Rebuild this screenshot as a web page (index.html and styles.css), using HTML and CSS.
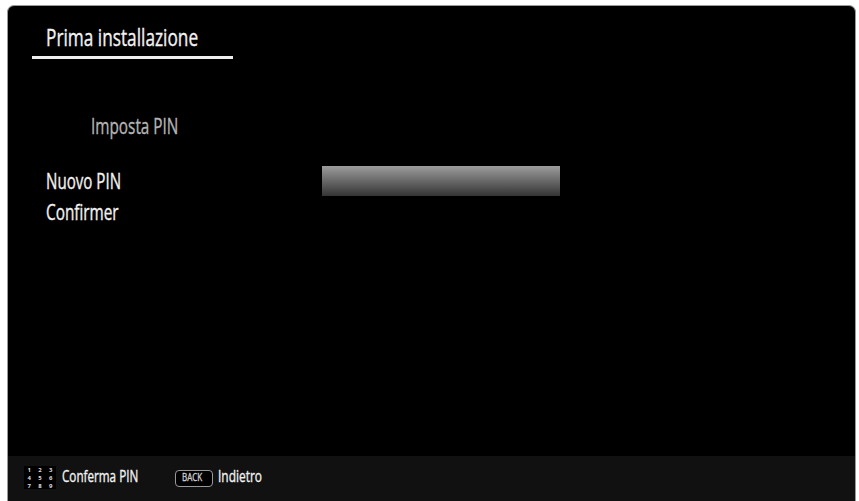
FILE: index.html
```html
<!DOCTYPE html>
<html lang="it">
<head>
    <meta charset="UTF-8">
    <meta name="viewport" content="width=device-width, initial-scale=1.0">
    <title>Prima installazione</title>
    <link rel="stylesheet" href="styles.css">
</head>
<body>
    <div class="screen">
        <div class="header">
            <span class="text title">Prima installazione</span>
        </div>
        <div class="content">
            <div class="subtitle"><span class="text subtitle-text">Imposta PIN</span></div>
            <div class="row">
                <div class="label"><span class="text new-pin">Nuovo PIN</span></div>
                <div class="pin-field"></div>
            </div>
            <div class="row">
                <div class="label"><span class="text confirm">Confirmer</span></div>
            </div>
        </div>
        <div class="footer">
            <div class="keypad">
                <span>1</span><span>2</span><span>3</span>
                <span>4</span><span>5</span><span>6</span>
                <span>7</span><span>8</span><span>9</span>
            </div>
            <div class="hint hint-pin"><span class="text hint-pin-text">Conferma PIN</span></div>
            <div class="back-key"><span class="text back-text">BACK</span></div>
            <div class="hint"><span class="text hint-back-text">Indietro</span></div>
        </div>
    </div>
</body>
</html>
```
FILE: styles.css
```css
* {
    box-sizing: border-box;
}
body {
    background-color: #fff;
    font-family: "Open Sans", "Noto Sans", sans-serif;
    margin: 0;
    padding: 5px 3px 0 7px;
    height: 501px;
    overflow: hidden;
}
.screen {
    display: flex;
    flex-direction: column;
    height: 496px;
    background-color: #000;
    border: 1px solid #999;
    border-bottom: none;
    border-radius: 7px 7px 0 0;
    color: #f2f2f2;
    overflow: hidden;
}
/* narrow TV menu lettering */
.text {
    display: inline-block;
    white-space: nowrap;
    transform-origin: left center;
    -webkit-text-stroke: 0.35px currentColor;
}
.header {
    width: 201px;
    height: 53px;
    margin-left: 24px;
    padding-left: 14px;
    border-bottom: 3px solid #eee;
    line-height: 63px;
}
.title {
    font-size: 23px;
    transform: scaleX(0.75);
}
.content {
    flex: 1;
    padding: 50px 0 0 38px;
    font-size: 21px;
}
.subtitle {
    height: 52px;
    padding-left: 45px;
    line-height: 34px;
    color: #b4b4b4;
}
.subtitle-text {
    transform: scaleX(0.73);
}
.row {
    display: flex;
    height: 31px;
    line-height: 40px;
}
.label {
    width: 276px;
}
.new-pin {
    transform: scaleX(0.72);
}
.confirm {
    transform: scaleX(0.73);
}
.pin-field {
    width: 238px;
    height: 30px;
    margin-top: 5px;
    background: linear-gradient(#9c9c9c, #343434);
}
.footer {
    display: flex;
    height: 45px;
    padding: 10px 0 0 16px;
    background-color: #111;
    font-size: 16px;
}
.keypad {
    display: grid;
    grid-template-columns: repeat(3, 1fr);
    width: 32px;
    height: 23px;
    background-color: #000;
    color: #ddd;
    font-size: 6px;
    font-weight: 700;
    line-height: 8px;
    text-align: center;
}
.hint {
    height: 20px;
    line-height: 20px;
}
.hint-pin {
    width: 119px;
    padding-left: 6px;
}
.hint-pin-text {
    transform: scaleX(0.73);
}
.hint-back-text {
    transform: scaleX(0.745);
}
.back-key {
    width: 38px;
    height: 17px;
    margin: 4px 5px 0 0;
    padding-left: 6px;
    border: 1px solid #999;
    border-radius: 4px;
    background-color: #000;
    color: #ccc;
    font-size: 10px;
    line-height: 12px;
}
.back-text {
    transform: scaleX(0.8);
}
```
